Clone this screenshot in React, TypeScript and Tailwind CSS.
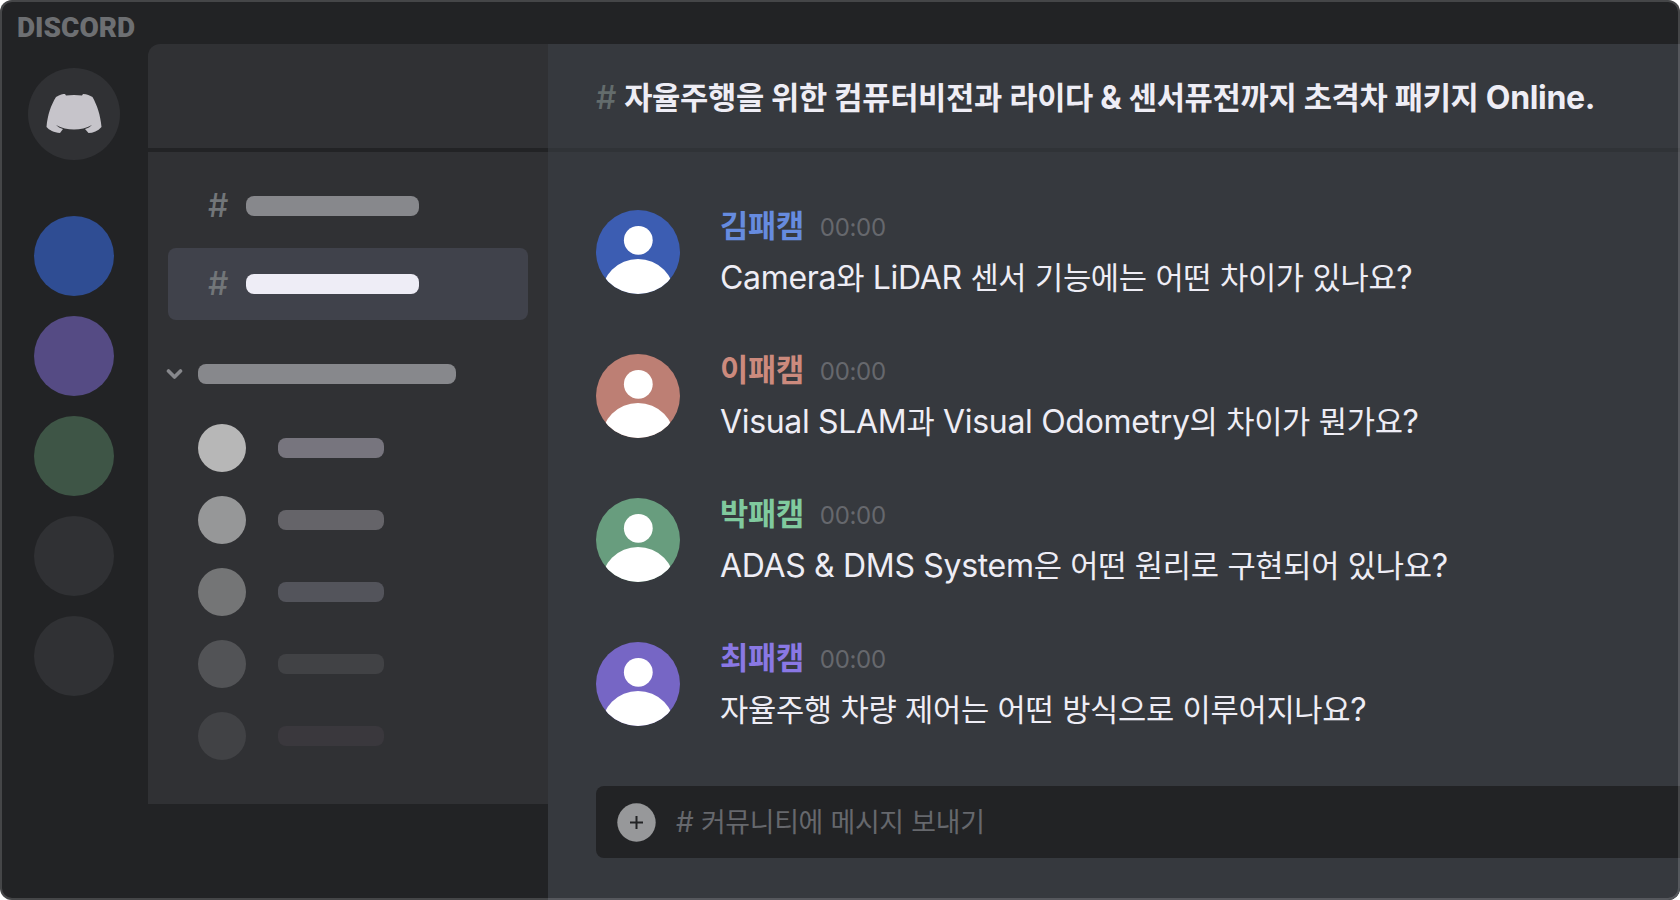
import React from 'react';

const servers = ['bg-[#2f4d93]', 'bg-[#554b84]', 'bg-[#3e5546]', 'bg-[#303134]', 'bg-[#303134]'];

const members = [
  { avatar: 'bg-[#b7b7b7]', bar: 'bg-[#77757e]' },
  { avatar: 'bg-[#969798]', bar: 'bg-[#656469]' },
  { avatar: 'bg-[#747576]', bar: 'bg-[#53545b]' },
  { avatar: 'bg-[#525356]', bar: 'bg-[#414245]' },
  { avatar: 'bg-[#414245]', bar: 'bg-[#3a383d]' },
];

const messages = [
  { name: '김패캠', nameColor: 'text-[#668bdf]', avatarColor: 'text-[#3c5db2]', text: 'Camera와 LiDAR 센서 기능에는 어떤 차이가 있나요?' },
  { name: '이패캠', nameColor: 'text-[#cc8a7d]', avatarColor: 'text-[#bd7f74]', text: 'Visual SLAM과 Visual Odometry의 차이가 뭔가요?' },
  { name: '박패캠', nameColor: 'text-[#80ca9e]', avatarColor: 'text-[#689d7e]', text: 'ADAS & DMS System은 어떤 원리로 구현되어 있나요?' },
  { name: '최패캠', nameColor: 'text-[#8a78e4]', avatarColor: 'text-[#7666c5]', text: '자율주행 차량 제어는 어떤 방식으로 이루어지나요?' },
];

// Hangul is set a touch smaller than the Latin letters beside it
const Mixed = ({ children }: { children: string }) => (
  <>
    {children.split(/([가-힣]+)/).map((part, index) =>
      index % 2 ? <span key={index} className="text-[0.96em]">{part}</span> : part
    )}
  </>
);

const DiscordMark = () => (
  <svg className="h-[42px] w-[58px]" viewBox="0 0 58 42" fill="#c6c4ca">
    <path d="M11 4 C15 1.5 18 1 20 1 L21 2.5 C26 1.8 32 1.8 37 2.5 L38 1 C42 1.2 45 2.5 47.500 4 C52 12 55.500 22 56.500 34 C53 38 48 40 43.500 40 L40 36 C43 35 45 34 47 32 C36 38 22 38 11 32 C13 34 15 35 18 36 L15 40 C9 39.500 4 37 1.500 34 C2.500 22 6 12 11 4Z" />
  </svg>
);

const Avatar = ({ className }: { className: string }) => (
  <svg className={`size-[84px] shrink-0 ${className}`} viewBox="0 0 84 84">
    <clipPath id="avatar">
      <circle cx="42" cy="42" r="42" />
    </clipPath>
    <g clipPath="url(#avatar)">
      <rect width="84" height="84" fill="currentColor" />
      <circle cx="42.300" cy="30.300" r="14.400" fill="#fff" />
      <circle cx="42" cy="85.800" r="36.800" fill="#fff" />
    </g>
  </svg>
);

const App = () => {
  return (
    <div className="relative flex h-[900px] w-[1680px] flex-col overflow-hidden rounded-[12px] bg-[#222325] font-['Inter','Noto_Sans_CJK_KR',sans-serif] tracking-[-0.02em]">
      <header className="flex h-11 shrink-0 items-center pt-3 pl-[17px]">
        <span className="font-['Roboto',sans-serif] text-[28px] font-black tracking-[0] text-[#6d6f72]">DISCORD</span>
      </header>

      <div className="flex flex-1">
        <nav className="flex w-[148px] flex-col items-center pt-6">
          <div className="mb-14 flex size-[92px] items-center justify-center rounded-full bg-[#303134]">
            <DiscordMark />
          </div>
          <div className="flex flex-col gap-5">
            {servers.map((color, index) => (
              <div key={index} className={`size-20 rounded-full ${color}`} />
            ))}
          </div>
        </nav>

        <aside className="h-[760px] w-[400px] rounded-tl-[12px] bg-[#303134]">
          <div className="h-[108px] border-b-4 border-[#222325]" />
          <div className="px-5 pt-[18px]">
            <div className="flex h-[72px] items-center pl-10">
              <span className="w-[37.500px] text-[32px] font-medium text-[#727679]">#</span>
              <div className="h-[20.500px] w-[173.500px] rounded-lg bg-[#87888c]" />
            </div>
            <div className="mt-1.5 flex h-[72px] items-center rounded-lg bg-[#40424b] pl-10">
              <span className="w-[37.500px] text-[32px] font-medium text-[#727679]">#</span>
              <div className="h-[20.500px] w-[173.500px] rounded-lg bg-[#eeedf6]" />
            </div>
            <div className="mt-11 flex h-5 items-center">
              <svg className="mr-[14px] -ml-[2px] h-[11px] w-[18px]" viewBox="0 0 18 11" fill="none" stroke="#87888c" strokeWidth="3.600" strokeLinecap="round" strokeLinejoin="round">
                <path d="M2.500 2 L8.500 8 L14.500 2" />
              </svg>
              <div className="h-5 w-[258px] rounded-lg bg-[#87888c]" />
            </div>
            <div className="mt-10 flex flex-col gap-6 pl-[30px]">
              {members.map((member, index) => (
                <div key={index} className="flex items-center gap-8">
                  <div className={`size-12 rounded-full ${member.avatar}`} />
                  <div className={`h-5 w-[106px] rounded-lg ${member.bar}`} />
                </div>
              ))}
            </div>
          </div>
        </aside>

        <main className="flex w-[1132px] flex-col bg-[#36393e]">
          <div className="flex h-[108px] items-center gap-2 border-b-4 border-[#303337] pt-1 pl-12 text-[32px] whitespace-nowrap">
            <span className="font-medium text-[#636c6c]">#</span>
            <h1 className="font-bold text-[#eeedf5]">
              <Mixed>자율주행을 위한 컴퓨터비전과 라이다 & 센서퓨전까지 초격차 패키지 Online.</Mixed>
            </h1>
          </div>
          <div className="flex flex-col gap-[60px] pt-[58px] pl-12">
            {messages.map((message, index) => (
              <div key={index} className="flex h-[84px] gap-10">
                <Avatar className={message.avatarColor} />
                <div className="-mt-2 whitespace-nowrap">
                  <div className="flex h-12 items-center gap-4">
                    <span className={`text-[32px] font-bold ${message.nameColor}`}>
                      <Mixed>{message.name}</Mixed>
                    </span>
                    <span className="pt-1 text-2xl text-[#66686d]">00:00</span>
                  </div>
                  <p className="text-[32px] leading-[56px] text-[#eeedf5]">
                    <Mixed>{message.text}</Mixed>
                  </p>
                </div>
              </div>
            ))}
          </div>
          <div className="mt-[60px] ml-12 flex h-[72px] items-center rounded-l-lg bg-[#222325] pl-[21px]">
            <svg className="mr-5 size-[39px]" viewBox="0 0 39 39">
              <circle cx="19.500" cy="19.500" r="19.200" fill="#97989a" />
              <path d="M13 19.500 H26 M19.500 13 V26" stroke="#222325" strokeWidth="2" />
            </svg>
            <span className="text-[28px] text-[#66686d]">
              <Mixed># 커뮤니티에 메시지 보내기</Mixed>
            </span>
          </div>
        </main>
      </div>

      {/* window outline, drawn over the panels */}
      <div className="pointer-events-none absolute inset-0 rounded-[12px] border-2 border-white/16" />
    </div>
  );
};

export default App;
